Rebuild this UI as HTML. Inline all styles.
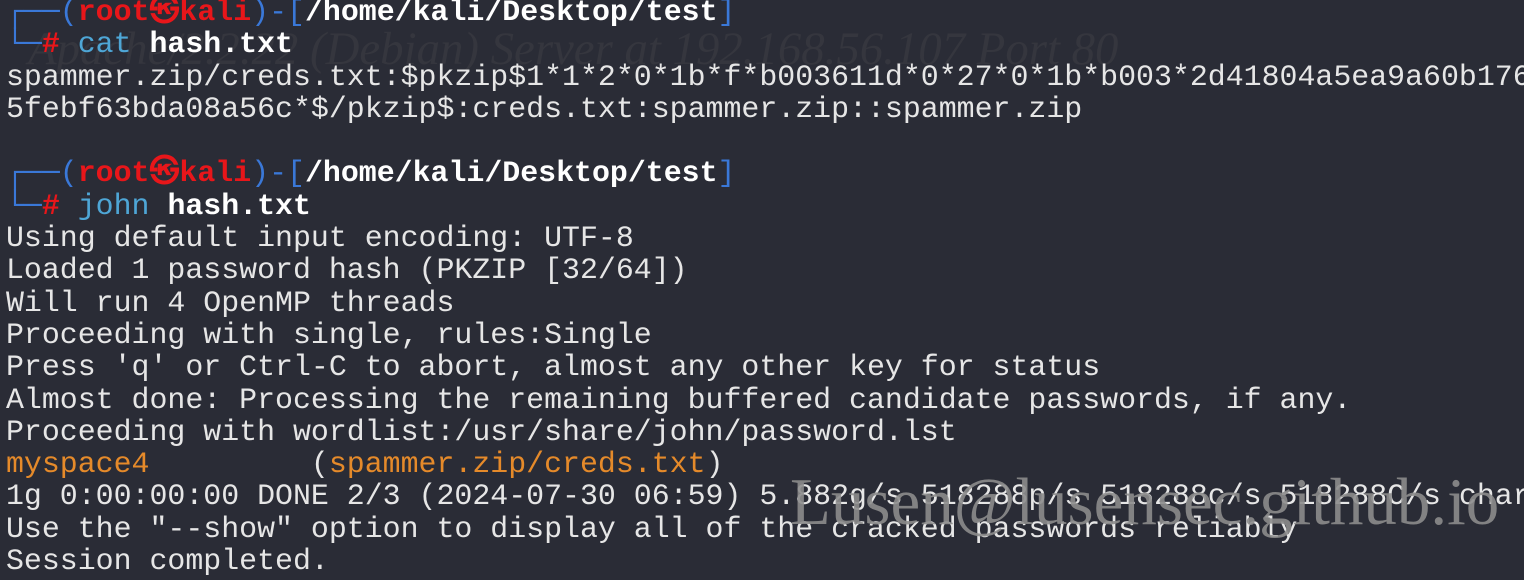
<!DOCTYPE html>
<html><head><meta charset="utf-8"><style>
html,body{margin:0;padding:0;background:#2a2c36;width:1524px;height:580px;overflow:hidden}
.t{position:absolute;left:6px;top:-4px;font-family:"Liberation Mono","DejaVu Sans Mono",monospace;font-size:29.9px;line-height:32.3px;color:#e6e6e6;white-space:pre}
.b{color:#3a78d8}.r{color:#e8161a;font-weight:bold}.w{color:#fff;font-weight:bold}.c{color:#4ea6d6}.o{color:#e58a2a}
.ap{position:absolute;left:28px;top:22px;font-family:"Liberation Serif",serif;font-style:italic;font-size:46.8px;color:#35363e;white-space:pre}
.wm{position:absolute;left:790px;top:464px;font-family:"Liberation Serif",serif;font-size:67px;color:rgba(140,140,140,0.9);white-space:pre}
</style></head><body>
<div class="ap">Apache/2.2.22 (Debian) Server at 192.168.56.107 Port 80</div>
<div class="t"><span class="b">┌──(</span><span class="r">root㉿kali</span><span class="b">)-[</span><span class="w">/home/kali/Desktop/test</span><span class="b">]</span>
<span class="b">└─</span><span class="r">#</span> <span class="c">cat</span> <span class="w">hash.txt</span>
spammer.zip/creds.txt:$pkzip$1*1*2*0*1b*f*b003611d*0*27*0*1b*b003*2d41804a5ea9a60b1769d
5febf63bda08a56c*$/pkzip$:creds.txt:spammer.zip::spammer.zip

<span class="b">┌──(</span><span class="r">root㉿kali</span><span class="b">)-[</span><span class="w">/home/kali/Desktop/test</span><span class="b">]</span>
<span class="b">└─</span><span class="r">#</span> <span class="c">john</span> <span class="w">hash.txt</span>
Using default input encoding: UTF-8
Loaded 1 password hash (PKZIP [32/64])
Will run 4 OpenMP threads
Proceeding with single, rules:Single
Press 'q' or Ctrl-C to abort, almost any other key for status
Almost done: Processing the remaining buffered candidate passwords, if any.
Proceeding with wordlist:/usr/share/john/password.lst
<span class="o">myspace4</span>         (<span class="o">spammer.zip/creds.txt</span>)
1g 0:00:00:00 DONE 2/3 (2024-07-30 06:59) 5.882g/s 518288p/s 518288c/s 518288C/s char
Use the "--show" option to display all of the cracked passwords reliably
Session completed.</div>
<div class="wm">Lusen@lusensec.github.io</div>
</body></html>
